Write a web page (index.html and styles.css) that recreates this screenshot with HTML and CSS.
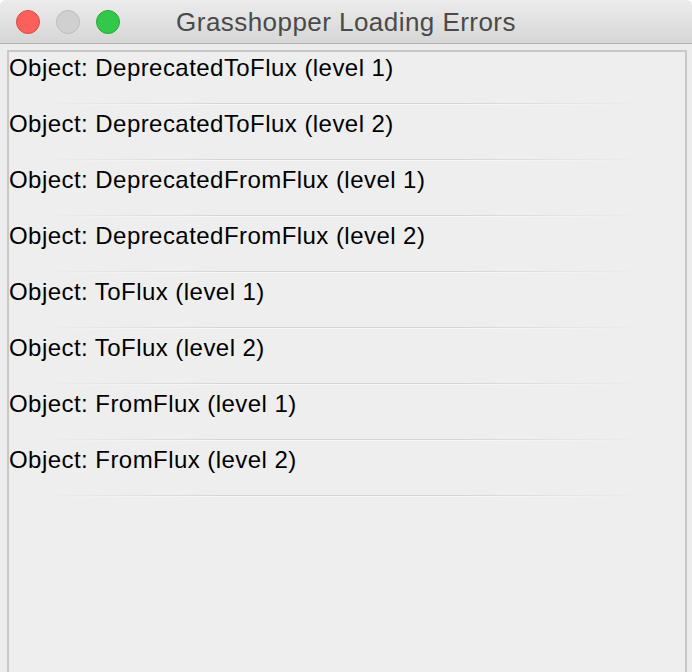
FILE: index.html
```html
<!DOCTYPE html>
<html>
<head>
<meta charset="utf-8">
<link rel="stylesheet" href="styles.css">
</head>
<body>
<div class="window">
  <div class="titlebar">
    <div class="lights">
      <span class="light red"></span>
      <span class="light gray"></span>
      <span class="light green"></span>
    </div>
    <div class="title">Grasshopper Loading Errors</div>
  </div>
  <div class="content">
    <div class="frame">
      <div class="row">Object: DeprecatedToFlux (level 1)</div>
      <div class="row">Object: DeprecatedToFlux (level 2)</div>
      <div class="row">Object: DeprecatedFromFlux (level 1)</div>
      <div class="row">Object: DeprecatedFromFlux (level 2)</div>
      <div class="row">Object: ToFlux (level 1)</div>
      <div class="row">Object: ToFlux (level 2)</div>
      <div class="row">Object: FromFlux (level 1)</div>
      <div class="row">Object: FromFlux (level 2)</div>
    </div>
  </div>
</div>
</body>
</html>
```
FILE: styles.css
```css
html, body {
  margin: 0;
  padding: 0;
  background: #ffffff;
}
.window {
  width: 692px;
  height: 672px;
  background: #ececec;
  border-radius: 6px 6px 0 0;
  overflow: hidden;
  display: flex;
  flex-direction: column;
  font-family: "Liberation Sans", Arial, sans-serif;
}
.titlebar {
  height: 43px;
  flex: none;
  background: linear-gradient(to bottom, #ececec, #d6d6d6);
  border-bottom: 1px solid #b4b4b4;
  display: flex;
  align-items: center;
  position: relative;
}
.lights {
  display: flex;
  gap: 16px;
  padding-left: 16px;
  padding-top: 1px;
}
.light {
  width: 24px;
  height: 24px;
  border-radius: 50%;
  box-sizing: border-box;
}
.red { background: #fc605c; border: 1px solid #de4a45; }
.gray { background: #d0d0d0; border: 1px solid #bdbdbd; }
.green { background: #34c84a; border: 1px solid #27a839; }
.title {
  position: absolute;
  left: 0;
  right: 0;
  top: 0;
  bottom: 0;
  display: flex;
  align-items: center;
  justify-content: center;
  font-size: 26px;
  letter-spacing: 0.45px;
  color: #4a4a4a;
  padding-top: 1px;
}
.content {
  flex: 1;
  padding: 6px 5px 0 7px;
  display: flex;
}
.frame {
  flex: 1;
  border: 2px solid #c8c8c8;
  border-bottom: none;
  background: #eeeeee;
}
.row {
  height: 56px;
  font-size: 24px;
  line-height: 28px;
  letter-spacing: 0.45px;
  color: #000;
  padding-top: 2px;
  box-sizing: border-box;
  position: relative;
}
.row::after {
  content: "";
  position: absolute;
  left: 30px;
  right: 40px;
  top: 51px;
  height: 2px;
  background:
    linear-gradient(to right, rgba(236,236,236,0), #d6d6d6 30%, #d6d6d6 70%, rgba(236,236,236,0)) top / 100% 1px no-repeat,
    linear-gradient(to right, rgba(255,255,255,0), #f8f8f8 30%, #f8f8f8 70%, rgba(255,255,255,0)) bottom / 100% 1px no-repeat;
}
```
